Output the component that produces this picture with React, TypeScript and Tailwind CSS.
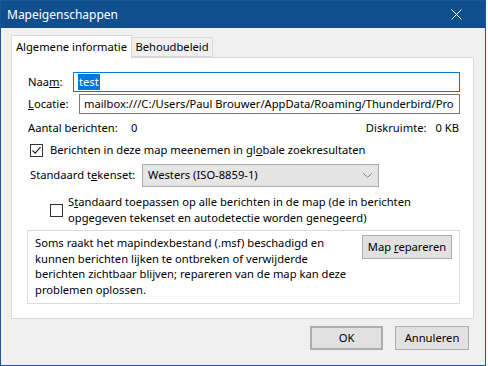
import React from 'react';

const font = "font-['Noto_Sans',sans-serif] text-[11.2px] whitespace-nowrap";

const Check: React.FC<{ checked?: boolean }> = ({ checked }) => (
  <div className="w-[13px] h-[13px] border border-[#333333] bg-white flex items-center justify-center shrink-0">
    {checked && (
      <svg width="11" height="11" viewBox="0 0 11 11">
        <path d="M1.5 5.5 L4.2 8.2 L9.5 2.2" fill="none" stroke="#222" strokeWidth="1.2" />
      </svg>
    )}
  </div>
);

const Btn: React.FC<{ children: React.ReactNode; className?: string }> = ({ children, className }) => (
  <div
    className={`h-[24px] flex items-center justify-center bg-[#e1e1e1] border border-[#adadad] text-black shrink-0 ${className ?? ''}`}
  >
    {children}
  </div>
);

const App: React.FC = () => {
  return (
    <div className={`w-[488px] h-[366px] bg-white ${font}`}>
      <div className="w-[486px] h-[366px] border border-[#185696] bg-[#f0f0f0] flex flex-col">
        {/* title bar */}
        <div className="h-[27px] bg-[#0f4f8f] flex items-center justify-between pl-[6px] pr-[23px] shrink-0">
          <span className="text-white text-[12px]">Mapeigenschappen</span>
          <svg width="11" height="11" viewBox="0 0 11 11">
            <path d="M0.5 0.5 L10.5 10.5 M10.5 0.5 L0.5 10.5" stroke="white" strokeWidth="1" />
          </svg>
        </div>

        <div className="px-[10px] flex flex-col">
          {/* tabs */}
          <div className="mt-[7px] h-[23px] flex items-end relative z-10">
            <div className="h-[23px] w-[121px] bg-white border border-b-0 border-[#d9d9d9] flex items-center justify-center text-black">
              Algemene informatie
            </div>
            <div className="h-[20px] w-[81px] bg-[#f0f0f0] border border-l-0 border-[#d9d9d9] flex items-center justify-center text-black mb-[1px]">
              Behoudbeleid
            </div>
          </div>

          {/* panel */}
          <div className="-mt-px w-[463px] h-[262px] border border-[#d9d9d9] bg-white flex flex-col text-black">
            <div className="mt-[14px] ml-[16px] h-[20px] flex items-center">
              <span className="w-[45px]">
                Naa<u>m</u>:
              </span>
              <div className="w-[387px] h-[20px] border border-[#0078d7] flex items-center pl-[4px]">
                <span className="bg-[#0078d7] text-white leading-[16px] px-px">test</span>
              </div>
            </div>

            <div className="mt-[2px] ml-[16px] h-[20px] flex items-center">
              <span className="w-[51px]">
                <u>L</u>ocatie:
              </span>
              <div className="w-[381px] h-[20px] border border-[#7a7a7a] flex items-center pl-[4px] overflow-hidden">
                <span>mailbox:///C:/Users/Paul Brouwer/AppData/Roaming/Thunderbird/Pro</span>
              </div>
            </div>

            <div className="mt-[6px] ml-[16px] w-[431px] h-[16px] flex items-center justify-between">
              <div className="flex">
                <span className="w-[103px]">Aantal berichten:</span>
                <span>0</span>
              </div>
              <div className="flex gap-[9px]">
                <span>Diskruimte:</span>
                <span>0 KB</span>
              </div>
            </div>

            <div className="mt-[6px] ml-[18px] h-[16px] flex items-center gap-[7px]">
              <Check checked />
              <span>
                Berichten in deze map meenemen in gl<u>o</u>bale zoekresultaten
              </span>
            </div>

            <div className="mt-[6px] ml-[18px] h-[23px] flex items-center">
              <span className="w-[112px]">
                Standaard t<u>e</u>kenset:
              </span>
              <div className="w-[237px] h-[23px] bg-[#e5e5e5] border border-[#adadad] flex items-center justify-between pl-[5px] pr-[6px]">
                <span>Westers (ISO-8859-1)</span>
                <svg width="9" height="6" viewBox="0 0 9 6">
                  <path d="M0.5 0.5 L4.5 4.5 L8.5 0.5" fill="none" stroke="#777" strokeWidth="1" />
                </svg>
              </div>
            </div>

            <div className="mt-[7px] ml-[38px] flex items-center gap-[5px]">
              <Check />
              <div className="leading-[16px]">
                S<u>t</u>andaard toepassen op alle berichten in de map (de in berichten
                <br />
                opgegeven tekenset en autodetectie worden genegeerd)
              </div>
            </div>

            <div className="mt-[4px] ml-[15px] w-[433px] h-[74px] border border-[#dcdcdc] flex justify-between pl-[7px] pr-[7px] pt-[4px]">
              <div className="leading-[15.5px]">
                Soms raakt het mapindexbestand (.msf) beschadigd en
                <br />
                kunnen berichten lijken te ontbreken of verwijderde
                <br />
                berichten zichtbaar blijven; repareren van de map kan deze
                <br />
                problemen oplossen.
              </div>
              <Btn className="w-[90px] h-[23px]">
                <span>
                  Map <u>r</u>epareren
                </span>
              </Btn>
            </div>
          </div>

          {/* buttons */}
          <div className="mt-[7px] flex justify-end gap-[12px] mr-[6px]">
            <Btn className="w-[73px] border-2 border-[#1a78d0]">OK</Btn>
            <Btn className="w-[74px]">Annuleren</Btn>
          </div>
        </div>
      </div>
    </div>
  );
};

export default App;
